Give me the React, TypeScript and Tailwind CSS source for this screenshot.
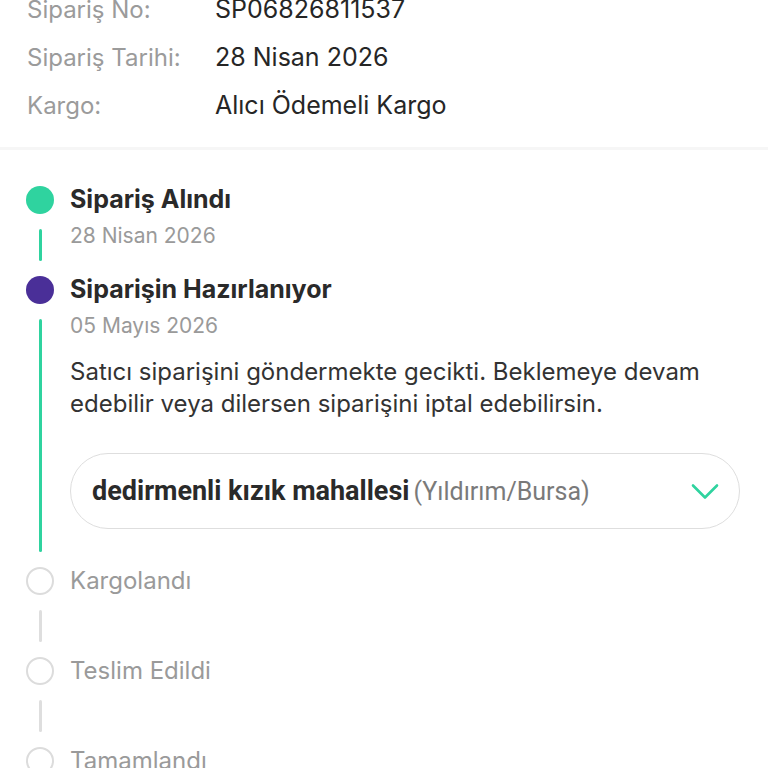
import React from "react";

type Step = {
  title: string;
  state: "done" | "active" | "pending";
  date?: string;
  body?: React.ReactNode;
  last?: boolean;
};

const info = [
  { label: "Sipariş No:", value: "SP06826811537" },
  { label: "Sipariş Tarihi:", value: "28 Nisan 2026" },
  { label: "Kargo:", value: "Alıcı Ödemeli Kargo" },
];

function Dot({ state }: { state: Step["state"] }) {
  if (state === "done") return <div className="h-[28px] w-[28px] shrink-0 rounded-full bg-[#2fd39f]" />;
  if (state === "active") return <div className="h-[28px] w-[28px] shrink-0 rounded-full bg-[#4a2f98]" />;
  return <div className="h-[28px] w-[28px] shrink-0 rounded-full border-[2.5px] border-[#dcdcdc] bg-white" />;
}

function TimelineStep({ step, lineGreen }: { step: Step; lineGreen: boolean }) {
  const pending = step.state === "pending";
  return (
    <div className="flex gap-[16px]">
      <div className="flex w-[28px] shrink-0 flex-col items-center">
        <Dot state={step.state} />
        {!step.last && (
          <div
            className={
              lineGreen
                ? "my-[15px] w-[3px] flex-1 rounded-full bg-[#2fd39f]"
                : "my-[15px] w-[3px] flex-1 rounded-full bg-[#dedede]"
            }
          />
        )}
      </div>
      <div className="min-w-0 flex-1">
        <div
          className={
            pending
              ? "flex h-[28px] items-center text-[24px] whitespace-nowrap text-[#9a9a9a]"
              : "flex h-[28px] items-center text-[25px] font-bold whitespace-nowrap text-[#2a2a2a]"
          }
        >
          {step.title}
        </div>
        {step.date && (
          <div className="mt-[10px] text-[21px] leading-[24px] text-[#9a9a9a]">{step.date}</div>
        )}
        {step.body}
        <div className={step.state === "active" ? "h-[38px]" : step.date ? "h-[28px]" : "h-[62px]"} />
      </div>
    </div>
  );
}

export default function App() {
  const steps: Step[] = [
    { title: "Sipariş Alındı", state: "done", date: "28 Nisan 2026" },
    {
      title: "Siparişin Hazırlanıyor",
      state: "active",
      date: "05 Mayıs 2026",
      body: (
        <>
          <p className="mt-[18px] text-[24px] leading-[32px] text-[#333]">
            Satıcı siparişini göndermekte gecikti. Beklemeye devam edebilir veya dilersen siparişini iptal
            edebilirsin.
          </p>
          <div className="mt-[33px] mr-[2px] flex h-[76px] items-center justify-between rounded-full border-[1.5px] border-[#dedede] bg-white pl-[21px] pr-[20px] font-['Roboto',sans-serif]">
            <div className="whitespace-nowrap text-[#2a2a2a]">
              <span className="text-[27px] font-bold">dedirmenli kızık mahallesi</span>{" "}
              <span className="text-[25px] text-[#7a7a7a]">(Yıldırım/Bursa)</span>
            </div>
            <svg width="28" height="18" viewBox="0 0 28 18" fill="none">
              <path d="M2 3.5l12 12 12-12" stroke="#2fd39f" strokeWidth="2.6" strokeLinecap="round" strokeLinejoin="round" />
            </svg>
          </div>
        </>
      ),
    },
    { title: "Kargolandı", state: "pending" },
    { title: "Teslim Edildi", state: "pending" },
    { title: "Tamamlandı", state: "pending", last: true },
  ];

  return (
    <div className="h-[768px] overflow-hidden bg-white font-['Inter',sans-serif]">
      <div className="-mt-[14px] px-[27px] pb-[17px]">
        {info.map((r) => (
          <div key={r.label} className="flex h-[48px] items-center whitespace-nowrap">
            <div className="w-[188px] shrink-0 text-[24px] text-[#9b9b9b]">{r.label}</div>
            <div className="text-[25px] text-[#262626]">{r.value}</div>
          </div>
        ))}
      </div>
      <div className="h-[3px] bg-[#f6f6f6]" />
      <div className="px-[26px] pt-[36px]">
        {steps.map((s, i) => (
          <TimelineStep key={s.title} step={s} lineGreen={i < 2} />
        ))}
      </div>
    </div>
  );
}
